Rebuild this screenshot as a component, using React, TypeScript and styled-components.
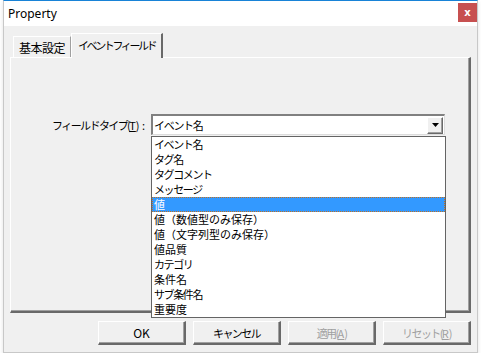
import React from 'react';
import styled, { createGlobalStyle } from 'styled-components';

const GlobalStyle = createGlobalStyle`
  html, body {
    margin: 0;
    padding: 0;
    background: #ffffff;
  }
  body {
    font-family: "Noto Sans CJK JP", "Noto Sans", sans-serif;
    font-size: 12px;
    color: #000;
  }
`;

const Window = styled.div`
  position: relative;
  margin-left: 3px;
  width: 475px;
  height: 353px;
  border: 1px solid #c8c8c8;
  border-top: 1px solid #1883d7;
  box-sizing: border-box;
  background: #f0f0f0;
  box-shadow: 0 2px 4px rgba(0, 0, 0, 0.12);
  display: flex;
  flex-direction: column;
`;

const TitleBar = styled.div`
  height: 25px;
  background: #ffffff;
  display: flex;
  align-items: center;
  justify-content: space-between;
  padding-left: 4px;
`;

const Title = styled.span`
  font-family: "Noto Sans", sans-serif;
  font-size: 12px;
  color: #000;
`;

const CloseButton = styled.div`
  width: 19px;
  height: 19px;
  margin-top: -3px;
  background: #c75050;
  color: #fff;
  display: flex;
  align-items: center;
  justify-content: center;
  font-family: "DejaVu Sans", sans-serif;
  font-weight: bold;
  font-size: 10px;
`;

const Body = styled.div`
  flex: 1;
  padding: 7px 6px 0 6px;
  display: flex;
  flex-direction: column;
`;

const TabStrip = styled.div`
  display: flex;
  align-items: flex-end;
  height: 24px;
  padding-left: 3px;
  position: relative;
  z-index: 1;
`;

const Tab = styled.div<{ $active?: boolean; $kana?: boolean }>`
  box-sizing: border-box;
  height: ${p => (p.$active ? '25px' : '21px')};
  margin-bottom: ${p => (p.$active ? '-1px' : '0')};
  padding: 0 ${p => (p.$active ? '6px' : '5px')} ${p => (p.$active ? '3px' : '0')};
  display: flex;
  align-items: center;
  background: #f0f0f0;
  border-top: 1px solid #ffffff;
  border-left: 1px solid #ffffff;
  border-right: ${p => (p.$active ? '2px solid #696969' : '1px solid #a0a0a0')};
  font-size: ${p => (p.$kana ? '11px' : '12px')};
  letter-spacing: ${p => (p.$kana ? '-2.4px' : '-0.5px')};
`;

const Panel = styled.div`
  box-sizing: border-box;
  height: 256px;
  border-top: 1px solid #ffffff;
  border-left: 1px solid #ffffff;
  border-right: 2px solid #696969;
  border-bottom: 2px solid #696969;
  box-shadow: inset -1px -1px 0 #a0a0a0;
  position: relative;
`;

const FieldRow = styled.div`
  display: grid;
  grid-template-columns: 92px 294px;
  column-gap: 6px;
  align-items: center;
  margin-top: 56px;
  padding-left: 42px;
`;

const Label = styled.span`
  justify-self: end;
  font-size: 11px;
  letter-spacing: -1.6px;
  white-space: nowrap;
`;

const Colon = styled.span`
  letter-spacing: 0;
  margin-left: 4px;
`;

const Combo = styled.div`
  position: relative;
  box-sizing: border-box;
  width: 294px;
  height: 21px;
  background: #ffffff;
  border-top: 2px solid #808080;
  border-left: 2px solid #808080;
  border-right: 1px solid #dcdcdc;
  border-bottom: 1px solid #dcdcdc;
  display: flex;
  align-items: center;
  padding-left: 1px;
`;

const ComboText = styled.span`
  flex: 1;
  font-size: 11px;
  letter-spacing: -1.3px;
`;

const ArrowButton = styled.div`
  box-sizing: border-box;
  width: 16px;
  height: 17px;
  margin-right: 1px;
  background: #f0f0f0;
  border-top: 1px solid #ffffff;
  border-left: 1px solid #ffffff;
  border-right: 1px solid #696969;
  border-bottom: 1px solid #696969;
  box-shadow: inset -1px -1px 0 #a0a0a0;
  display: flex;
  align-items: center;
  justify-content: center;
`;

const DropList = styled.ul`
  position: absolute;
  left: -2px;
  top: 20px;
  width: 295px;
  box-sizing: border-box;
  margin: 0;
  padding: 0;
  list-style: none;
  background: #ffffff;
  border: 1px solid #646464;
  z-index: 5;
`;

const Item = styled.li<{ $selected?: boolean; $kana?: boolean }>`
  box-sizing: border-box;
  height: 15px;
  line-height: 15px;
  padding-left: 2px;
  font-size: 11px;
  letter-spacing: ${p => (p.$kana ? '-1.4px' : '0')};
  background: ${p => (p.$selected ? '#3399ff' : 'transparent')};
  color: ${p => (p.$selected ? '#ffffff' : '#000000')};
  outline: ${p => (p.$selected ? '1px dotted #c07020' : 'none')};
  outline-offset: -1px;
  white-space: nowrap;
`;

const ButtonRow = styled.div`
  display: flex;
  justify-content: flex-end;
  gap: 7px;
  margin-top: 8px;
`;

const Button = styled.div<{ $disabled?: boolean; $latin?: boolean }>`
  box-sizing: border-box;
  width: 88px;
  height: 24px;
  display: flex;
  align-items: center;
  justify-content: center;
  background: #f0f0f0;
  border-top: 1px solid #ffffff;
  border-left: 1px solid #ffffff;
  border-right: 2px solid #696969;
  border-bottom: 2px solid #696969;
  box-shadow: inset -1px -1px 0 #a0a0a0;
  font-size: ${p => (p.$latin ? '12px' : '11px')};
  letter-spacing: ${p => (p.$latin ? '0' : '-1.6px')};
  color: ${p => (p.$disabled ? '#a0a0a0' : '#000000')};
`;

const U = styled.span`
  text-decoration: underline;
  letter-spacing: 0;
`;

const items = [
  { text: 'イベント名', kana: true },
  { text: 'タグ名', kana: true },
  { text: 'タグコメント', kana: true },
  { text: 'メッセージ', kana: true },
  { text: '値', kana: false },
  { text: '値（数値型のみ保存）', kana: false },
  { text: '値（文字列型のみ保存）', kana: false },
  { text: '値品質', kana: false },
  { text: 'カテゴリ', kana: true },
  { text: '条件名', kana: false },
  { text: 'サブ条件名', kana: true },
  { text: '重要度', kana: false },
];

export default function App() {
  return (
    <>
      <GlobalStyle />
      <Window>
        <TitleBar>
          <Title>Property</Title>
          <CloseButton>x</CloseButton>
        </TitleBar>
        <Body>
          <TabStrip>
            <Tab>基本設定</Tab>
            <Tab $active $kana>イベントフィールド</Tab>
          </TabStrip>
          <Panel>
            <FieldRow>
              <Label>
                フィールドタイプ(<U>T</U>)<Colon>:</Colon>
              </Label>
              <Combo>
                <ComboText>イベント名</ComboText>
                <ArrowButton>
                  <svg width="7" height="4" viewBox="0 0 7 4">
                    <path d="M0 0h7L3.5 4z" fill="#000" />
                  </svg>
                </ArrowButton>
                <DropList>
                  {items.map(it => (
                    <Item key={it.text} $kana={it.kana} $selected={it.text === '値'}>
                      {it.text}
                    </Item>
                  ))}
                </DropList>
              </Combo>
            </FieldRow>
          </Panel>
          <ButtonRow>
            <Button $latin>OK</Button>
            <Button>キャンセル</Button>
            <Button $disabled>
              適用(<U>A</U>)
            </Button>
            <Button $disabled>
              リセット(<U>R</U>)
            </Button>
          </ButtonRow>
        </Body>
      </Window>
    </>
  );
}
